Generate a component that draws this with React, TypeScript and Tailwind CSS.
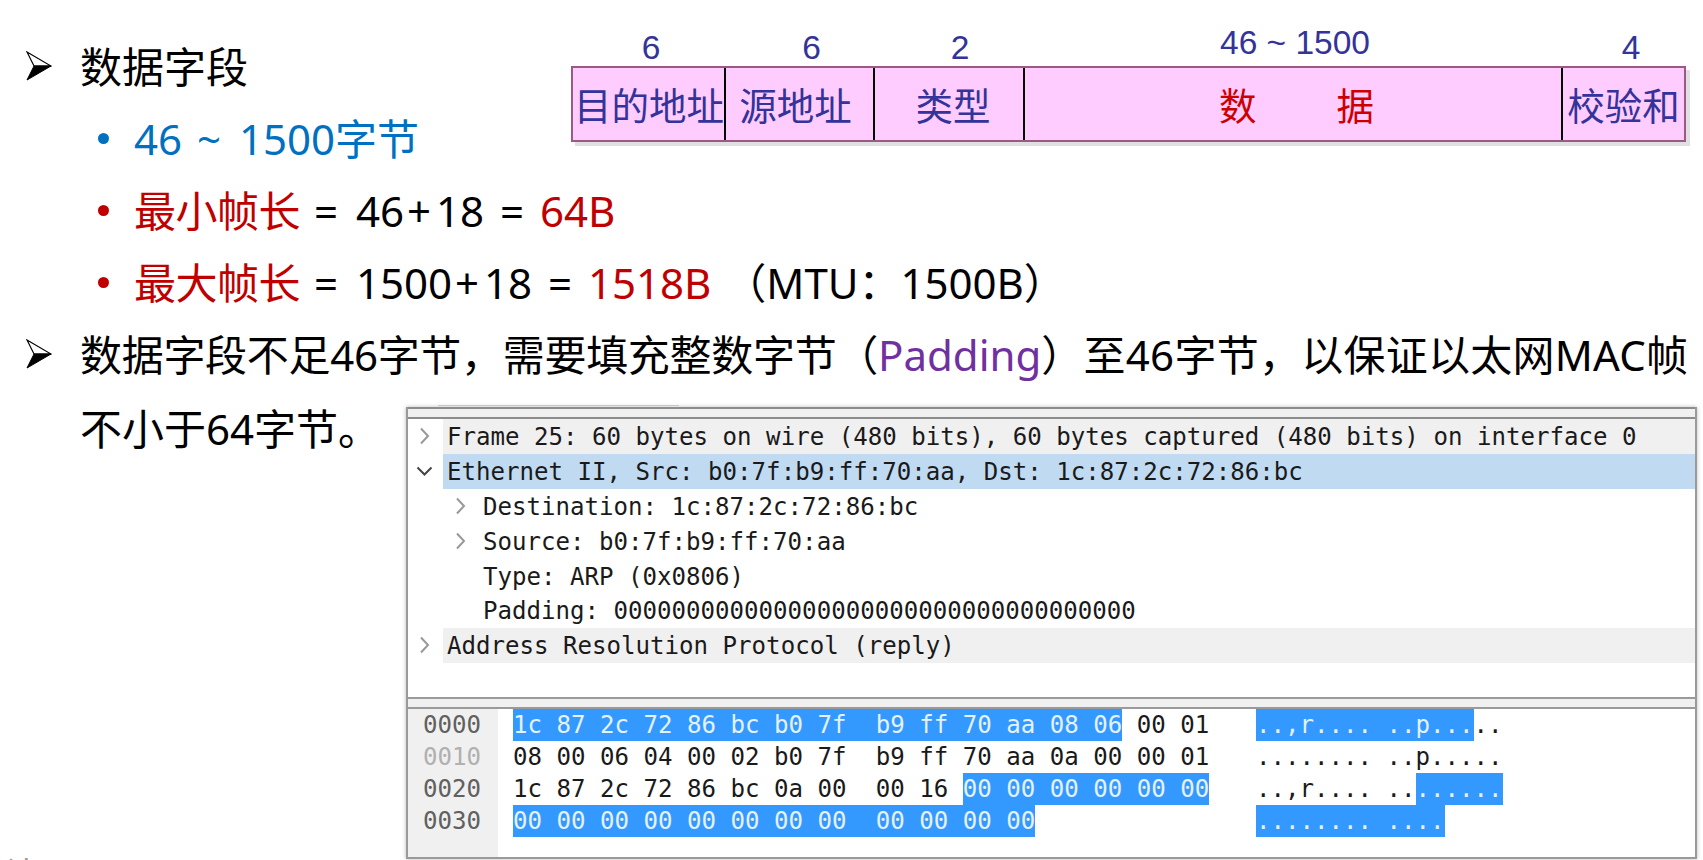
const sans = "font-['Noto_Sans','Noto_Sans_CJK_SC',sans-serif]"

function Arrow() {
	return (
		<svg width="26" height="30" viewBox="0 0 26 30" className="shrink-0">
			<path d="M1 1 L25 15 L8 15 Z" fill="#fff" stroke="#000" strokeWidth="1.2" />
			<path d="M1 29 L25 15 L8 15 Z" fill="#000" stroke="#000" strokeWidth="1" />
		</svg>
	)
}

function Head({ children }: { children: React.ReactNode }) {
	return (
		<div className="flex h-[72px] items-center whitespace-nowrap pl-[26px] text-[42px] text-black">
			<div className="w-[54px]">
				<Arrow />
			</div>
			<div>{children}</div>
		</div>
	)
}

function Bullet({ color, children }: { color: string; children: React.ReactNode }) {
	return (
		<div className="flex h-[72px] items-center whitespace-nowrap pl-[98px] text-[42px] text-black [word-spacing:5px]">
			<div className="w-[36px]">
				<div className={`size-[11px] rounded-full ${color}`} />
			</div>
			<div>{children}</div>
		</div>
	)
}

function Plus() {
	return <span className="ml-[3px] mr-[5px]">+</span>
}

function Equals() {
	return <span className="-ml-[2px] mr-[2px]">=</span>
}

const sizes = [
	{ label: "6", cls: "w-[154px] pl-[6px] pb-[2px]" },
	{ label: "6", cls: "w-[149px] pl-[24px] pb-[2px]" },
	{ label: "2", cls: "w-[150px] pl-[22px] pb-[2px]" },
	{ label: "46 ~ 1500", cls: "w-[538px] pl-[4px] pb-[12px]" },
	{ label: "4", cls: "w-[124px] pl-[14px] pb-[2px]" },
]

function FrameDiagram() {
	return (
		<div className="mt-[1px] w-[1115px] font-['Liberation_Sans',sans-serif]">
			<div className="flex h-[35px] items-center text-[33.5px] leading-none text-[#333399]">
				{sizes.map((s, i) => (
					<div key={i} className={`flex h-full items-center justify-center ${s.cls}`}>
						{s.label}
					</div>
				))}
			</div>
			<div className="flex h-[76px] border-2 border-[#9a5a84] bg-[#ffccff] text-[37.5px] text-[#333399] shadow-[4px_4px_0_#e0e0e0] font-['Noto_Sans_CJK_SC',sans-serif]">
				<div className="flex w-[153px] shrink-0 items-center justify-center whitespace-nowrap border-r-2 border-black pl-[1px]">目的地址</div>
				<div className="flex w-[149px] shrink-0 items-center justify-center border-r-2 border-black pr-[8px]">源地址</div>
				<div className="flex w-[150px] shrink-0 items-center justify-center border-r-2 border-black pl-[8px]">类型</div>
				<div className="flex w-[538px] shrink-0 items-center justify-center gap-[80px] border-r-2 border-black pl-[7px] text-[#cc0000]">
					<span>数</span>
					<span>据</span>
				</div>
				<div className="flex flex-1 items-center justify-center whitespace-nowrap">校验和</div>
			</div>
		</div>
	)
}

function Chevron({ open }: { open?: boolean }) {
	return (
		<svg width="20" height="20" viewBox="0 0 20 20" className="shrink-0">
			{open ? (
				<path d="M2.5 6.5 L9.5 13.5 L16.5 6.5" fill="none" stroke="#444" strokeWidth="2" />
			) : (
				<path d="M6 2.5 L13 10 L6 17.5" fill="none" stroke="#999" strokeWidth="2" />
			)}
		</svg>
	)
}

function TreeRow({
	text,
	bg = "",
	indent,
	chevron = true,
	open,
}: {
	text: string
	bg?: string
	indent?: boolean
	chevron?: boolean
	open?: boolean
}) {
	return (
		<div className="flex h-[34.8px] items-center">
			<div className="flex h-full w-[35px] shrink-0 items-center pl-[7px]">
				{chevron && !indent && <Chevron open={open} />}
			</div>
			<div className={`flex h-full flex-1 items-center pl-[4px] ${bg}`}>
				{indent && <div className="flex w-[36px] shrink-0 items-center pl-[4px]">{chevron && <Chevron />}</div>}
				<span className="pt-[2px] whitespace-pre">{text}</span>
			</div>
		</div>
	)
}

type Seg = [string, boolean?]

function Segs({ segs }: { segs: Seg[] }) {
	return (
		<>
			{segs.map(([text, selected], i) => (
				<span key={i} className={selected ? "flex items-center bg-[#3399ff] text-[#e4f1ff]" : "flex items-center"}>
					{text}
				</span>
			))}
		</>
	)
}

const hexRows: { offset: string; dim?: boolean; hex: Seg[]; ascii: Seg[] }[] = [
	{
		offset: "0000",
		hex: [["1c 87 2c 72 86 bc b0 7f  b9 ff 70 aa 08 06", true], [" 00 01"]],
		ascii: [["..,r.... ..p...", true], [".."]],
	},
	{
		offset: "0010",
		dim: true,
		hex: [["08 00 06 04 00 02 b0 7f  b9 ff 70 aa 0a 00 00 01"]],
		ascii: [["........ ..p....."]],
	},
	{
		offset: "0020",
		hex: [["1c 87 2c 72 86 bc 0a 00  00 16 "], ["00 00 00 00 00 00", true]],
		ascii: [["..,r.... .."], ["......", true]],
	},
	{
		offset: "0030",
		hex: [["00 00 00 00 00 00 00 00  00 00 00 00", true]],
		ascii: [["........ ....", true]],
	},
]

function PacketPanel() {
	return (
		<div className="flex h-[452px] w-[1291px] shrink-0 flex-col border-x-2 border-b-2 border-[#9a9a9a] bg-white text-[24.1px] leading-none text-[#1a1a1a] shadow-[0_0_4px_#bbb] font-['DejaVu_Sans_Mono',monospace]">
			<div className="h-[12px] border-y-2 border-[#8c8c8c] bg-[#f0f0f0]" />
			<TreeRow text="Frame 25: 60 bytes on wire (480 bits), 60 bytes captured (480 bits) on interface 0" bg="bg-[#f0f0f0]" />
			<TreeRow text="Ethernet II, Src: b0:7f:b9:ff:70:aa, Dst: 1c:87:2c:72:86:bc" bg="bg-[#c0daf2]" open />
			<TreeRow text="Destination: 1c:87:2c:72:86:bc" indent />
			<TreeRow text="Source: b0:7f:b9:ff:70:aa" indent />
			<TreeRow text="Type: ARP (0x0806)" indent chevron={false} />
			<TreeRow text="Padding: 000000000000000000000000000000000000" indent chevron={false} />
			<TreeRow text="Address Resolution Protocol (reply)" bg="bg-[#f0f0f0]" />
			<div className="flex-1" />
			<div className="h-[12px] border-y-2 border-[#9a9a9a] bg-[#f0f0f0]" />
			<div className="flex h-[148px]">
				<div className="w-[90px] shrink-0 bg-[#f0f0f0] pl-[15px]">
					{hexRows.map((r) => (
						<div key={r.offset} className={`flex h-[32px] items-center ${r.dim ? "text-[#b0b0b0]" : "text-[#606060]"}`}>
							{r.offset}
						</div>
					))}
				</div>
				<div className="pl-[15px]">
					{hexRows.map((r) => (
						<div key={r.offset} className="flex h-[32px] whitespace-pre">
							<div className="flex w-[743px]">
								<Segs segs={r.hex} />
							</div>
							<div className="flex">
								<Segs segs={r.ascii} />
							</div>
						</div>
					))}
				</div>
			</div>
		</div>
	)
}

export default function App() {
	return (
		<div className={`h-[860px] w-[1703px] overflow-hidden bg-white pt-[30px] ${sans}`}>
			<div className="flex h-[144px]">
				<div className="w-[571px] shrink-0">
					<Head>数据字段</Head>
					<Bullet color="bg-[#0070c0]">
						<span className="text-[#0070c0]">
							46 <span className="ml-[-1px] mr-[2px]">~</span> 1500字节
						</span>
					</Bullet>
				</div>
				<FrameDiagram />
			</div>
			<Bullet color="bg-[#c00000]">
				<span className="tracking-[-0.5px] text-[#c00000]">最小帧长</span> <Equals /> 46
				<Plus />
				18 = <span className="text-[#c00000]">64B</span>
			</Bullet>
			<Bullet color="bg-[#c00000]">
				<span className="tracking-[-0.5px] text-[#c00000]">最大帧长</span> <Equals /> 1500
				<Plus />
				18 = <span className="text-[#c00000]">1518B</span> <span className="-ml-[3px]">（MTU：1500B）</span>
			</Bullet>
			<Head>
				<span className="tracking-[-0.3px]">数据字段不足46字节，需要填充整数字节（</span>
				<span className="text-[#7030a0]">Padding</span>
				<span className="tracking-[0.25px]">）至46字节，以保证以太网MAC帧</span>
			</Head>
			<div className="flex">
				<div className="w-[406px] shrink-0 whitespace-nowrap pl-[80px] pt-[3px] text-[42px] leading-[72px] text-black">
					不小于64字节。
					<div className="-ml-[75px] mt-[388px] text-[32px] leading-[40px] text-[#999]">计日</div>
				</div>
				<div>
					<div className="ml-[32px] mb-[1px] mt-[15px] h-[1px] w-[241px] bg-[#cccccc]" />
					<PacketPanel />
				</div>
			</div>
		</div>
	)
}
